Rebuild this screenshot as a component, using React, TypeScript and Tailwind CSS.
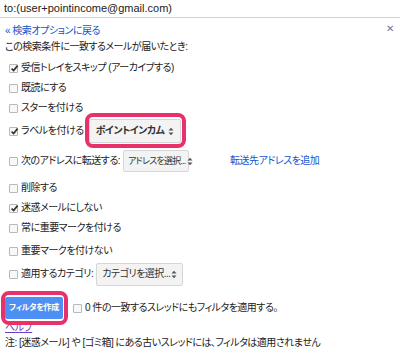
import React from "react";

function Box({ checked }: { checked?: boolean }) {
  return (
    <span className="relative inline-block w-[9px] h-[9px] border border-[#b8b8b8] rounded-[1px] bg-[#f8f8f8] shrink-0">
      {checked && (
        <svg viewBox="0 0 9 9" className="absolute left-[0px] top-[-1px] w-[9px] h-[9px]">
          <path d="M1.6 4.6 L3.6 6.6 L7.6 1.6" stroke="#333" strokeWidth="1.7" fill="none" />
        </svg>
      )}
    </span>
  );
}

function Arrows() {
  return (
    <svg viewBox="0 0 6 9" className="w-[6px] h-[9px] shrink-0">
      <path d="M0.5 3.5 L3 0.8 L5.5 3.5 Z" fill="#555" />
      <path d="M0.5 5.5 L3 8.2 L5.5 5.5 Z" fill="#555" />
    </svg>
  );
}

function Row({ checked, children }: { checked?: boolean; children: React.ReactNode }) {
  return (
    <div className="flex items-center h-[20px] pl-[9px] gap-[3px]">
      <Box checked={checked} />
      <span>{children}</span>
    </div>
  );
}

export default function App() {
  return (
    <div className="w-[400px] h-[350px] overflow-hidden bg-white relative text-[10px] tracking-[-0.5px] text-[#222] font-['Liberation_Sans','Noto_Sans_CJK_JP',sans-serif] [font-feature-settings:'palt'] leading-none whitespace-nowrap">
      <div className="h-[18px] border-b border-[#d2d2d2] pl-[4px] flex items-center text-[11px] tracking-normal">
        to:(user+pointincome@gmail.com)
      </div>
      <div className="relative mt-[6px] h-[14px] pl-[5px] flex items-center text-[#1155cc]">
        « 検索オプションに戻る
        <span className="absolute right-[6px] top-[0px] text-[#777] text-[10px] tracking-normal">✕</span>
      </div>
      <div className="mt-[2px] h-[14px] pl-[5px] flex items-center">この検索条件に一致するメールが届いたとき:</div>

      <div className="mt-[4px]">
        <Row checked>受信トレイをスキップ (アーカイブする)</Row>
        <Row>既読にする</Row>
        <Row>スターを付ける</Row>

        <div className="mt-[1px] flex items-center h-[24px] pl-[9px] gap-[3px]">
          <Box checked />
          <span>ラベルを付ける</span>
          <div className="relative ml-[2px]">
            <span className="absolute left-[-4px] right-[-5px] top-[-6px] bottom-[-5px] border-[4px] border-[#e8306b] rounded-[8px]" />
            <div className="w-[92px] h-[24px] flex items-center justify-between pl-[6px] pr-[6px] border border-[#d6d6d6] rounded-[2px] bg-[#f3f3f3] text-[#333] font-bold">
              <span>ポイントインカム</span>
              <Arrows />
            </div>
          </div>
        </div>

        <div className="mt-[7px] flex items-center h-[22px] pl-[9px] gap-[3px]">
          <Box />
          <span>次のアドレスに転送する:</span>
          <div className="w-[66px] h-[22px] flex items-center justify-between gap-[2px] pl-[4px] pr-[4px] border border-[#d6d6d6] rounded-[2px] bg-[#f3f3f3] text-[#333]">
            <span className="text-[9px] tracking-[-0.8px]">アドレスを選択...</span>
            <Arrows />
          </div>
          <span className="ml-[38px] text-[#1155cc]">転送先アドレスを追加</span>
        </div>

        <div className="mt-[6px]">
          <Row>削除する</Row>
          <Row checked>迷惑メールにしない</Row>
          <Row>常に重要マークを付ける</Row>
        </div>
        <div className="mt-[3px]">
          <Row>重要マークを付けない</Row>
        </div>

        <div className="mt-[1px] flex items-center h-[24px] pl-[9px] gap-[3px]">
          <Box />
          <span>適用するカテゴリ:</span>
          <div className="w-[87px] h-[23px] flex items-center justify-between pl-[5px] pr-[5px] border border-[#d6d6d6] rounded-[2px] bg-[#f3f3f3] text-[#333]">
            <span>カテゴリを選択...</span>
            <Arrows />
          </div>
        </div>

        <div className="mt-[11px] flex items-center h-[22px] pl-[5px]">
          <div className="relative">
            <span className="absolute left-[-4px] right-[-5px] top-[-6px] bottom-[-6px] border-[4px] border-[#e8306b] rounded-[8px]" />
            <div className="w-[58px] h-[22px] flex items-center justify-center bg-[#4d8ff5] rounded-[2px] text-white font-bold text-[8px] tracking-[-0.3px]">
              フィルタを作成
            </div>
          </div>
          <span className="ml-[10px] flex"><Box /></span>
          <span className="ml-[3px]">0 件の一致するスレッドにもフィルタを適用する。</span>
        </div>

        <div className="mt-[2px] h-[14px] pl-[5px] flex items-center">
          <span className="text-[#6a3fc6] underline">ヘルプ</span>
        </div>
        <div className="mt-[1px] h-[14px] pl-[5px] flex items-center">
          注: [迷惑メール] や [ゴミ箱] にある古いスレッドには、フィルタは適用されません
        </div>
      </div>
    </div>
  );
}
